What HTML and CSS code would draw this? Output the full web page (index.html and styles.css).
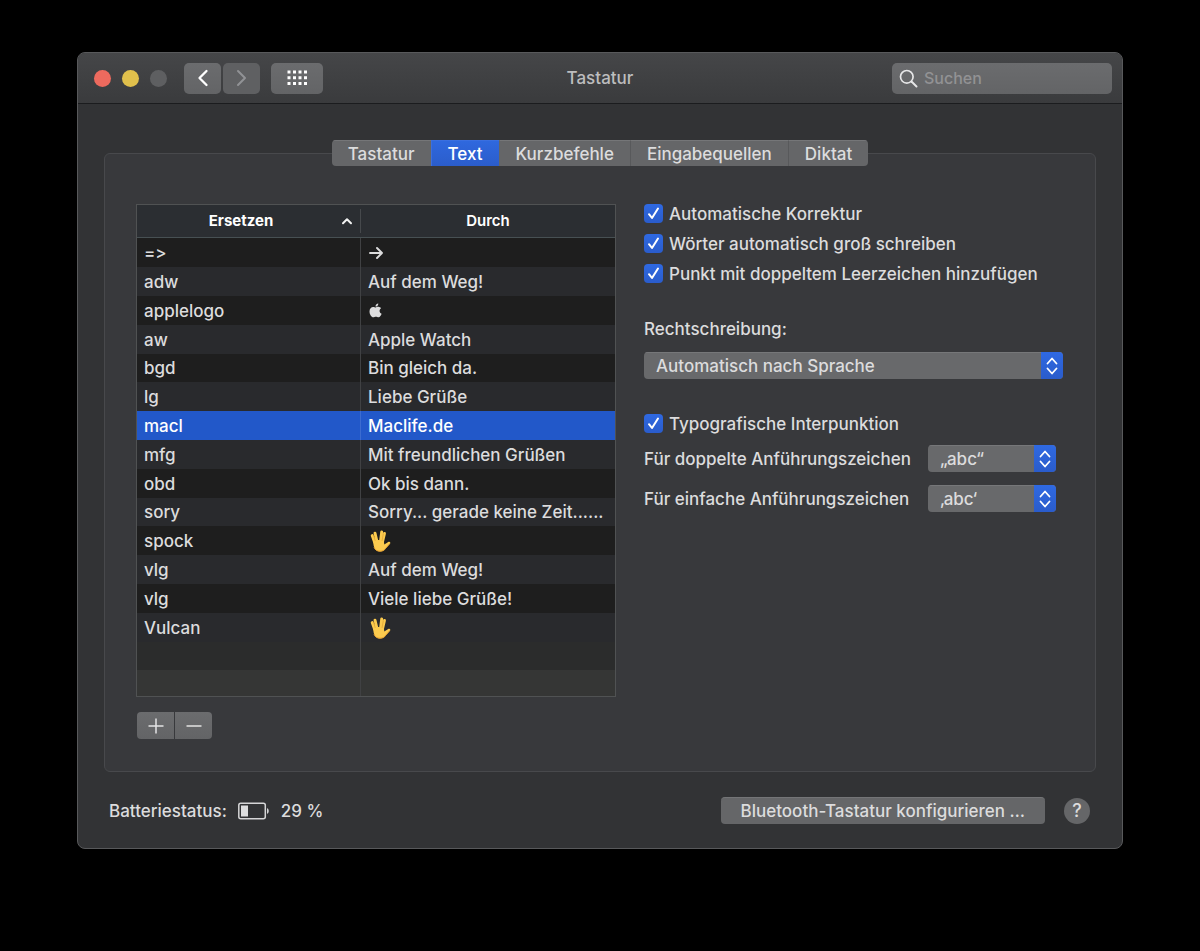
FILE: index.html
```
<!DOCTYPE html>
<html lang="de">
<head>
<meta charset="utf-8">
<title>Tastatur</title>
<link rel="stylesheet" href="styles.css">
</head>
<body>
<svg class="sprite" aria-hidden="true">
  <symbol id="updown" viewBox="0 0 12 20"><path d="M1.500 7.500 6 2.500l4.500 5M1.500 12.500 6 17.500l4.500-5" fill="none" stroke="currentColor" stroke-width="1.800" stroke-linecap="round" stroke-linejoin="round"/></symbol>
  <symbol id="apple" viewBox="0 0 13 15"><path d="M9.300.4c.1 1.700-1.200 3.200-2.800 3.200C6.300 2 7.700.6 9.300.4zM6.600 4.400c.7 0 1.500-.7 2.800-.6 1 .1 2 .5 2.700 1.500-2.200 1.400-1.900 4.500.5 5.500-.5 1.400-1.700 3.500-3 3.500-1 0-1.500-.6-2.700-.6s-1.700.6-2.600.6C2.500 14.300.5 11.400.5 8.500c0-3 1.800-4.600 3.600-4.600 1.200 0 1.900.5 2.500.5z" fill="currentColor"/></symbol>
  <symbol id="vulcan" viewBox="0 0 22 24">
    <path d="M5 13 2.700 6.500M7.500 12.500 5.500 4.200M11 12.500l1.200-9.500M13 13l2-8.500" fill="none" stroke="#fccb4e" stroke-width="2.900" stroke-linecap="round"/>
    <path d="M3.600 11.500 9 11l5.300.5.500 4 4.300-2.700c1.300-.6 2.300.7 1.400 1.800l-4.300 4.900c-1.200 2-3 3-5.700 3-4.500 0-6.600-3.500-6.900-11z" fill="#fccb4e"/>
    <path d="M4.500 18c1 3 3 4.200 6 4.200 2.700 0 4.500-1 5.700-3l4-4.500" fill="none" stroke="#e9a231" stroke-width="1"/>
    <path d="M5.600 11.500 4.100 6.500M12.600 11.500l1.200-6.500" stroke="#d9982c" stroke-width=".6" stroke-linecap="round"/>
  </symbol>
</svg>

<div class="window">
  <header class="titlebar">
    <div class="titlebar-left">
      <div class="lights">
        <span class="light light-close"></span>
        <span class="light light-min"></span>
        <span class="light"></span>
      </div>
      <div class="nav">
        <button class="tool" aria-label="Zurück"><svg width="12" height="18" viewBox="0 0 12 18"><path d="M9.500 2 2.500 9l7 7" fill="none" stroke="#fff" stroke-width="2.300" stroke-linecap="round" stroke-linejoin="round"/></svg></button>
        <button class="tool" aria-label="Vor" disabled><svg width="12" height="18" viewBox="0 0 12 18"><path d="m2 2 7 7-7 7" fill="none" stroke="#919295" stroke-width="2" stroke-linecap="round" stroke-linejoin="round"/></svg></button>
      </div>
      <button class="tool tool-grid" aria-label="Alle einblenden"><svg width="21" height="16" viewBox="0 0 21 16"><path d="M2 .5v3M7.500.5v3M13 .5v3M18.500.5v3M2 6.200v3M7.500 6.200v3M13 6.200v3M18.500 6.200v3M2 11.900v3M7.500 11.900v3M13 11.900v3M18.500 11.900v3" stroke="#fff" stroke-width="3"/></svg></button>
    </div>
    <h1 class="title">Tastatur</h1>
    <label class="search">
      <svg width="19" height="19" viewBox="0 0 19 19"><circle cx="7.800" cy="7.800" r="6.300" fill="none" stroke="#e6e6e7" stroke-width="1.700"/><path d="m12.500 12.500 5 5" stroke="#e6e6e7" stroke-width="2" stroke-linecap="round"/></svg>
      <input type="search" placeholder="Suchen" aria-label="Suchen">
    </label>
  </header>

  <main class="content">
    <div class="tabs" role="tablist">
      <button class="tab" role="tab">Tastatur</button>
      <button class="tab tab-active" role="tab" aria-selected="true">Text</button>
      <button class="tab" role="tab">Kurzbefehle</button>
      <button class="tab" role="tab">Eingabequellen</button>
      <button class="tab" role="tab">Diktat</button>
    </div>

    <section class="panel">
      <div class="replacements">
        <table class="table">
          <thead>
            <tr>
              <th class="col-from"><div class="head"><span class="head-text">Ersetzen</span><svg width="12" height="8" viewBox="0 0 12 8"><path d="M2 6.300 6 2.200l4 4.100" fill="none" stroke="#f2f2f2" stroke-width="2" stroke-linecap="round" stroke-linejoin="round"/></svg></div></th>
              <th class="col-to"><span class="head-text">Durch</span></th>
            </tr>
          </thead>
          <tbody>
            <tr><td>=&gt;</td><td><svg class="glyph" width="16" height="14" viewBox="0 0 16 14" role="img" aria-label="Pfeil"><path d="M2 7h12M9 2l5 5-5 5" fill="none" stroke="currentColor" stroke-width="1.900" stroke-linecap="round" stroke-linejoin="round"/></svg></td></tr>
            <tr><td>adw</td><td>Auf dem Weg!</td></tr>
            <tr><td>applelogo</td><td><svg class="glyph" width="15" height="15"><use href="#apple"/></svg></td></tr>
            <tr><td>aw</td><td>Apple Watch</td></tr>
            <tr><td>bgd</td><td>Bin gleich da.</td></tr>
            <tr><td>lg</td><td>Liebe Grüße</td></tr>
            <tr class="selected"><td>macl</td><td>Maclife.de</td></tr>
            <tr><td>mfg</td><td>Mit freundlichen Grüßen</td></tr>
            <tr><td>obd</td><td>Ok bis dann.</td></tr>
            <tr><td>sory</td><td>Sorry... gerade keine Zeit......</td></tr>
            <tr><td>spock</td><td><svg class="glyph" width="25" height="24"><use href="#vulcan"/></svg></td></tr>
            <tr><td>vlg</td><td>Auf dem Weg!</td></tr>
            <tr><td>vlg</td><td>Viele liebe Grüße!</td></tr>
            <tr><td>Vulcan</td><td><svg class="glyph" width="25" height="24"><use href="#vulcan"/></svg></td></tr>
            <tr class="blank"><td></td><td></td></tr>
            <tr class="blank blank-last"><td></td><td></td></tr>
          </tbody>
        </table>
        <div class="edit">
          <button class="edit-button" aria-label="Hinzufügen"><svg width="16" height="16" viewBox="0 0 16 16"><path d="M8 .5v15M.5 8h15" stroke="#e4e4e5" stroke-width="1.500"/></svg></button>
          <button class="edit-button" aria-label="Entfernen"><svg width="16" height="16" viewBox="0 0 16 16"><path d="M.5 8h15" stroke="#e4e4e5" stroke-width="1.500"/></svg></button>
        </div>
      </div>

      <form class="options">
        <div class="checks">
          <label class="check"><input type="checkbox" checked><svg class="tick" viewBox="0 0 19 19"><path d="m5 10.200 3 3.800 6-9.500"/></svg><span>Automatische Korrektur</span></label>
          <label class="check"><input type="checkbox" checked><svg class="tick" viewBox="0 0 19 19"><path d="m5 10.200 3 3.800 6-9.500"/></svg><span>Wörter automatisch groß schreiben</span></label>
          <label class="check"><input type="checkbox" checked><svg class="tick" viewBox="0 0 19 19"><path d="m5 10.200 3 3.800 6-9.500"/></svg><span>Punkt mit doppeltem Leerzeichen hinzufügen</span></label>
        </div>
        <div class="spelling">
          <label for="spelling">Rechtschreibung:</label>
          <div class="select"><select id="spelling"><option>Automatisch nach Sprache</option></select><span class="arrows"><svg width="12" height="20"><use href="#updown"/></svg></span></div>
        </div>
        <div class="quotes">
          <label class="check"><input type="checkbox" checked><svg class="tick" viewBox="0 0 19 19"><path d="m5 10.200 3 3.800 6-9.500"/></svg><span>Typografische Interpunktion</span></label>
          <div class="pairs">
            <label for="double">Für doppelte Anführungszeichen</label>
            <div class="select"><select id="double"><option>„abc“</option></select><span class="arrows"><svg width="12" height="20"><use href="#updown"/></svg></span></div>
            <label for="single">Für einfache Anführungszeichen</label>
            <div class="select"><select id="single"><option>‚abc‘</option></select><span class="arrows"><svg width="12" height="20"><use href="#updown"/></svg></span></div>
          </div>
        </div>
      </form>
    </section>

    <footer class="footer">
      <div class="battery">
        <span>Batteriestatus:</span>
        <svg width="32" height="18" viewBox="0 0 32 18"><rect x=".8" y="1.200" width="26.500" height="15.600" rx="2" fill="none" stroke="#d6d6d7" stroke-width="1.500"/><path d="M3 3.500h7v11H3z" fill="#dededf"/><path d="M29 6.200c2.300.4 2.300 5.200 0 5.600z" fill="#d6d6d7"/></svg>
        <span>29 %</span>
      </div>
      <div class="actions">
        <button class="push">Bluetooth-Tastatur konfigurieren …</button>
        <button class="help" aria-label="Hilfe">?</button>
      </div>
    </footer>
  </main>
</div>
</body>
</html>
```
FILE: styles.css
```
* { box-sizing: border-box; }

body {
  margin: 0;
  padding: 52px 77px;
  background: #000;
  color: #dcdcdd;
  font: 500 17px/20px Inter, "Liberation Sans", sans-serif;
  font-variant-ligatures: no-contextual;
}

button, input, select { font: inherit; color: inherit; }
button { border: 0; margin: 0; padding: 0; }
svg { display: block; flex: none; }
.sprite { position: absolute; width: 0; height: 0; }

.window {
  overflow: hidden;
  border: 1px solid #58595b;
  border-radius: 8px;
  background: #323335;
}

.titlebar {
  display: grid;
  grid-template-columns: 1fr auto 1fr;
  align-items: center;
  height: 51px;
  padding: 0 10px 0 16px;
  border-bottom: 1px solid #1b1c1e;
  background: linear-gradient(#454648, #3a3b3d);
}
.titlebar-left, .lights, .nav { display: flex; align-items: center; }
.titlebar-left { gap: 11px; }
.lights { gap: 11px; margin-right: 6px; }
.light { width: 17px; height: 17px; border-radius: 50%; background: #5e5f61; }
.light-close { background: #ed6a5e; }
.light-min { background: #e0c04c; }
.nav { gap: 2px; }
.tool {
  display: grid;
  place-items: center;
  width: 37px;
  height: 31px;
  border-radius: 5px;
  background: linear-gradient(#6b6c6e, #636466);
}
.tool:disabled { background: #5f6062; }
.tool-grid { width: 52px; }
.title { margin: 0 6px 0 0; font-size: 17px; font-weight: 500; color: #bdbdbe; }
.search {
  display: flex;
  align-items: center;
  justify-self: end;
  gap: 6px;
  width: 220px;
  height: 31px;
  padding: 0 7px;
  border-radius: 5px;
  background: linear-gradient(#6b6c6e, #636466);
}
.search input {
  flex: 1;
  min-width: 0;
  padding: 0;
  border: 0;
  outline: 0;
  background: none;
  font-size: 16px;
}
.search input::placeholder { color: #929294; opacity: 1; }

.content { display: flex; flex-direction: column; padding: 36px 26px 24px; }

.tabs {
  position: relative;
  display: flex;
  align-self: center;
  margin-bottom: -13px;
  overflow: hidden;
  border-radius: 4px;
  background: #656668;
}
.tab {
  height: 26px;
  padding: 0 16px;
  border-top: 1px solid #757678;
  border-left: 1px solid #58595b;
  background: none;
}
.tab:first-child { border-left: 0; }
.tab-active + .tab { border-left-color: transparent; }
.tab-active { border-color: #3a6fe0; background: linear-gradient(#2f68de, #2b5dcb); color: #fff; }

.panel {
  display: grid;
  grid-template-columns: minmax(0, 480fr) minmax(0, 419fr);
  gap: 28px;
  padding: 50px 32px 32px 31px;
  border: 1px solid #48494c;
  border-radius: 6px;
  background: #38393c;
}

.table {
  width: 100%;
  table-layout: fixed;
  border: 1px solid #505253;
  border-spacing: 0;
  background: #1e1e1e;
}
.table th { height: 33px; padding: 4px 0; border-bottom: 1px solid #475053; background: #2b2e32; color: #fff; font-size: 15px; font-weight: 700; line-height: 24px; }
.table .col-to { font-weight: 600; }
.col-from { width: 224px; }
.col-from .head { display: flex; align-items: center; padding: 0 7px 0 4px; border-right: 1px solid #46494c; }
.head-text { flex: 1; }
.table td { height: 29px; padding: 0 7px; overflow: hidden; white-space: nowrap; }
.table td:first-child { border-right: 1px solid #404143; }
.table tr:nth-child(5n) td { height: 28px; }
.table tbody tr:nth-child(even) { background: #292a2d; }
.table tbody .selected { background: #2258c9; color: #fff; }
.table .selected td:first-child { border-right-color: #3c6cd0; }
.table tbody .blank { background: #2b2c2c; }
.table tbody tr.blank-last { background: #353635; }
.table .blank-last td { height: 26px; }

.edit { display: flex; gap: 1px; margin-top: 15px; padding-left: 1px; }
.edit-button { display: grid; place-items: center; width: 37px; height: 27px; background: linear-gradient(#6b6c6e, #636466); }
.edit-button:first-child { border-radius: 4px 0 0 4px; }
.edit-button:last-child { border-radius: 0 4px 4px 0; }

.options { display: flex; flex-direction: column; gap: 35px; }
.checks { display: flex; flex-direction: column; gap: 10px; }
.check { display: grid; grid-template-columns: 19px 1fr; column-gap: 6px; align-items: center; height: 20px; }
.check input, .tick { grid-area: 1 / 1; width: 19px; height: 19px; margin: 0; align-self: start; }
.check input { appearance: none; border-radius: 4px; background: linear-gradient(#2f69e2, #2a5ccb); }
.tick { z-index: 1; visibility: hidden; pointer-events: none; fill: none; stroke: #fff; stroke-width: 2; stroke-linecap: round; stroke-linejoin: round; }
.check input:checked + .tick { visibility: visible; }

.spelling { display: flex; flex-direction: column; gap: 13px; }
.select {
  display: grid;
  grid-template-columns: 1fr 22px;
  height: 27px;
  overflow: hidden;
  border-radius: 4px;
  background: #68696b;
}
.select select {
  grid-area: 1 / 1 / 2 / 3;
  min-width: 0;
  padding: 0 22px 1px 12px;
  border: 0;
  border-top: 1px solid #767779;
  background: none;
  appearance: none;
}
.arrows { grid-area: 1 / 2; display: grid; place-items: center; background: linear-gradient(#2f69e2, #2a5ccb); color: #fff; pointer-events: none; }

.quotes { display: flex; flex-direction: column; gap: 11px; }
.pairs { display: grid; grid-template-columns: auto 128px; justify-content: start; align-items: center; gap: 13px 17px; }

.footer { display: flex; justify-content: space-between; align-items: center; padding: 25px 6px 0 5px; }
.battery, .actions { display: flex; align-items: center; }
.battery { gap: 11px; }
.actions { gap: 19px; }
.push { height: 27px; padding: 0 20px; border-radius: 4px; border-top: 1px solid #747577; background: #656668; }
.help { width: 26px; height: 26px; border-radius: 50%; background: #656668; font-size: 18px; }
```
